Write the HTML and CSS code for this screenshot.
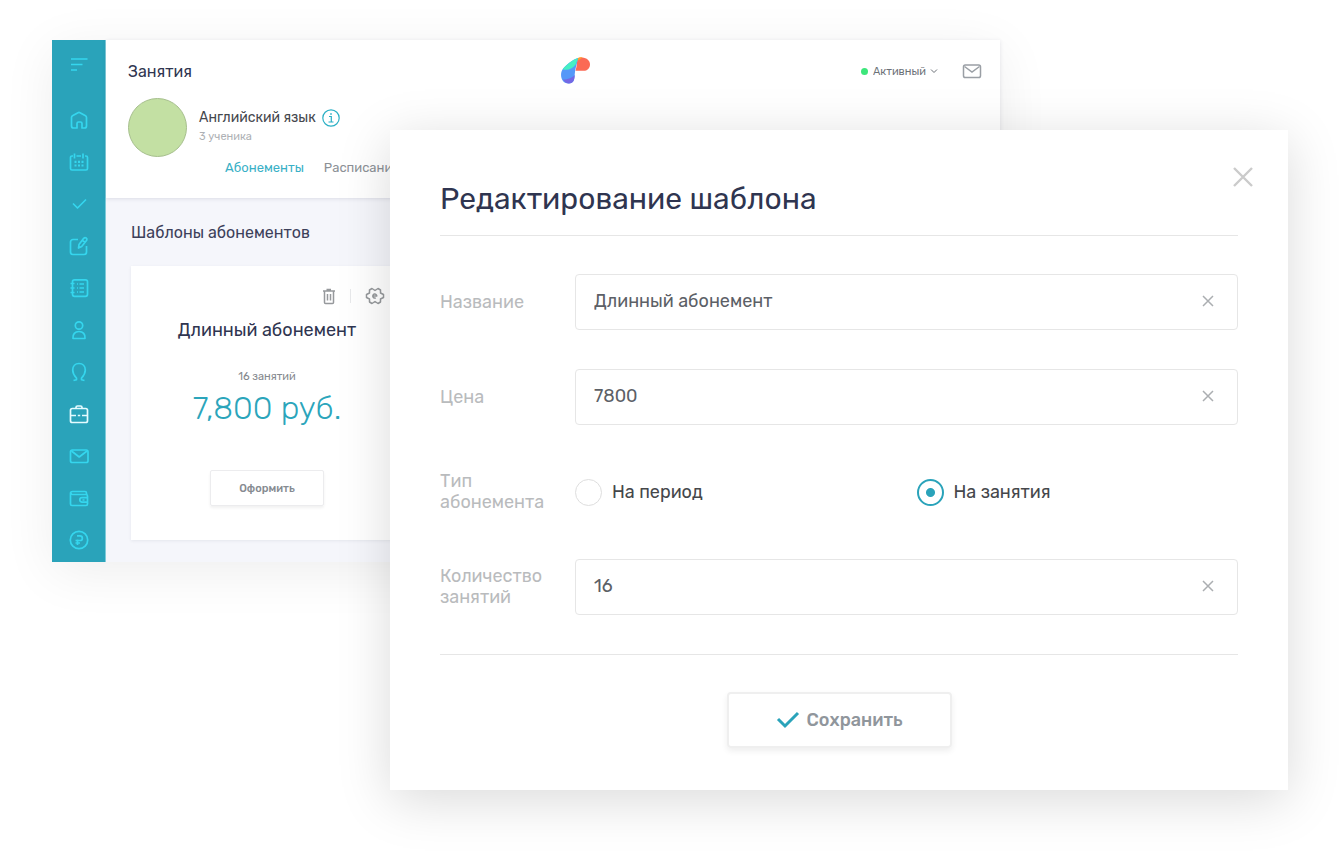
FILE: index.html
```html
<!DOCTYPE html>
<html lang="ru">
<head>
  <meta charset="utf-8">
  <meta name="viewport" content="width=device-width, initial-scale=1">
  <title>Занятия</title>
  <link rel="stylesheet" href="styles.css">
</head>
<body>
  <div class="scene">
    <div class="app">
      <nav class="sidebar">
        <a href="#" class="menu-toggle" aria-label="Меню">
          <svg width="20" height="20" viewBox="0 0 20 20"><path d="M2 4h16.500M2 9.500h11.500M2 15h6"/></svg>
        </a>
        <a href="#" class="nav-item" aria-label="Главная">
          <svg width="20" height="20" viewBox="0 0 20 20"><path d="M7 18H4.500a2 2 0 0 1-2-2V7.500a2 2 0 0 1 1-1.700L9 2.700a2 2 0 0 1 2 0l5.500 3.100a2 2 0 0 1 1 1.700V16a2 2 0 0 1-2 2H13v-4.500a1.500 1.500 0 0 0-1.500-1.500h-2A1.500 1.500 0 0 0 8 13.500V18z"/></svg>
        </a>
        <a href="#" class="nav-item" aria-label="Календарь">
          <svg width="20" height="20" viewBox="0 0 20 20"><path d="M4 4H3a1.500 1.500 0 0 0-1.500 1.500v11A1.500 1.500 0 0 0 3 18h14a1.500 1.500 0 0 0 1.500-1.500v-11A1.500 1.500 0 0 0 17 4h-1M5.500 1.500v5M14 1.500v5M7.500 4H12"/><path d="M5.500 9.800h2m1.500 0h2m1.500 0h2M5.500 13.500h2m1.500 0h2m1.500 0h2" stroke-width="2.200"/></svg>
        </a>
        <a href="#" class="nav-item" aria-label="Задачи">
          <svg width="20" height="20" viewBox="0 0 20 20"><path d="M4 9.500l4.500 4.500L17 5.500"/></svg>
        </a>
        <a href="#" class="nav-item" aria-label="Записи">
          <svg width="20" height="20" viewBox="0 0 20 20"><path d="M9 3.500H4A2.500 2.500 0 0 0 1.500 6v10A2.500 2.500 0 0 0 4 18.500h11a2.500 2.500 0 0 0 2.500-2.500v-6M9.500 12l.5-3.500 4.700-6.200c1.600-1.500 4 0 3 2L12.700 10.500zM13.500 4.500l2.500 1.800"/></svg>
        </a>
        <a href="#" class="nav-item" aria-label="Журнал">
          <svg width="20" height="20" viewBox="0 0 20 20"><rect x="3.500" y="1.800" width="15" height="16.500" rx="2"/><path d="M1.500 5.500h4M1.500 10h4M1.500 14.500h4M8 6h1m1.500 0H15M8 10h1m1.500 0H15M8 14h1m1.500 0H15"/></svg>
        </a>
        <a href="#" class="nav-item" aria-label="Ученики">
          <svg width="20" height="20" viewBox="0 0 20 20"><circle cx="10" cy="5.500" r="3.700"/><path d="M4 18.500c-.5-4.500 2-7 6-7s6.500 2.500 6 7z"/></svg>
        </a>
        <a href="#" class="nav-item" aria-label="Учителя">
          <svg width="20" height="20" viewBox="0 0 20 20"><path d="M4.500 18.500l3-.8V16C5 13.500 3.700 11 3.700 8c0-4 2.600-6.500 6.300-6.500S16.300 4 16.300 8c0 3-1.300 5.500-3.800 8v1.700l3 .8"/></svg>
        </a>
        <a href="#" class="nav-item active" aria-label="Занятия">
          <svg width="20" height="20" viewBox="0 0 20 20"><rect x="1.500" y="4.500" width="17" height="14" rx="1.800"/><path d="M7 4.500v-1A1.500 1.500 0 0 1 8.500 2h3A1.500 1.500 0 0 1 13 3.500v1M1.500 11.500H7m1.800 0h2.400m1.800 0h5.500"/></svg>
        </a>
        <a href="#" class="nav-item" aria-label="Почта">
          <svg width="20" height="20" viewBox="0 0 20 20"><rect x="1.500" y="4" width="17.500" height="12.500" rx="1.800"/><path d="M2.500 5l7.700 6L18 5"/></svg>
        </a>
        <a href="#" class="nav-item" aria-label="Кошелёк">
          <svg width="20" height="20" viewBox="0 0 20 20"><path d="M17.500 6.500V5A1.500 1.500 0 0 0 16 3.500H3.500a2 2 0 0 0-2 2V16a1.500 1.500 0 0 0 1.500 1.500h14A1.500 1.500 0 0 0 18.500 16V8A1.500 1.500 0 0 0 17 6.500H3.500a1.500 1.500 0 0 1-1.500-1.500M18.500 9.700H13a2.200 2.200 0 0 0 0 4.400h5.500M13.500 12h2"/></svg>
        </a>
        <a href="#" class="nav-item" aria-label="Оплата">
          <svg width="20" height="20" viewBox="0 0 20 20"><circle cx="10" cy="10" r="8.700"/><path d="M8.500 15V9.500M8 5.800h3a2.300 2.300 0 0 1 0 4.700H6.500M6.500 13H11"/></svg>
        </a>
      </nav>

      <div class="content">
        <header class="header">
          <div class="topbar">
            <h1 class="page-title">Занятия</h1>
            <svg class="logo" width="30" height="28" viewBox="0 0 30 28">
              <path d="M15.500 13.800C17 9 17 4 17.500 1.200 19 .5 20.500.4 22 .4c5 .2 8 3.500 8 6.800 0 4-2.500 6.600-6.500 6.600z" fill="#fb6a55"/>
              <path d="M17 1.800C18.500.5 20.500.2 22.500.4L17.500 4z" fill="#ff9f2e"/>
              <path d="M18 1C13 2.500 5 8.500 2.500 12.500-.5 17.500 1 26.500 8.500 26.500c5.500 0 6-4 6.200-9C15 11 17.500 6 18 1z" fill="#5598f8"/>
              <path d="M18 1C13 2.500 6 8 2.700 12.200 7 14 13 12 16 7z" fill="#45efc4"/>
              <path d="M3 22.500c2 3 4 4 6 4 4.500 0 5.500-4 5.700-8.500C12.500 20.500 8 22.500 3 22.500z" fill="#7468e4"/>
            </svg>
            <div class="account">
              <span class="dot"></span>
              <select class="status" aria-label="Статус">
                <option>Активный</option>
              </select>
              <svg class="chevron" width="8" height="8" viewBox="0 0 8 8"><path d="M1 2.500l3 3 3-3"/></svg>
              <a href="#" class="mail" aria-label="Сообщения">
                <svg width="20" height="16" viewBox="0 0 20 16"><rect x="1.500" y="2" width="17" height="12.500" rx="1.800"/><path d="M2.500 3.500L10 9l7.500-5.500"/></svg>
              </a>
            </div>
          </div>
          <div class="course">
            <div class="avatar"></div>
            <div class="course-info">
              <div class="course-name">
                Английский язык
                <svg width="18" height="18" viewBox="0 0 18 18"><circle cx="9" cy="9" r="8.200"/><path d="M7 7.500h2.300V13M6.500 13h5M9 4v2"/></svg>
              </div>
              <div class="course-count">3 ученика</div>
              <nav class="tabs">
                <a href="#" class="tab active">Абонементы</a>
                <a href="#" class="tab">Расписание</a>
              </nav>
            </div>
          </div>
        </header>

        <main class="main">
          <h2 class="section-title">Шаблоны абонементов</h2>
          <div class="card">
            <div class="card-tools">
              <button class="tool" aria-label="Удалить">
                <svg width="14" height="18" viewBox="0 0 14 18"><path d="M1 4h12M2.500 4v11.500a1 1 0 0 0 1 1h7a1 1 0 0 0 1-1V4M5.500 7v6.500M8.500 7v6.500M4.500 2.500H9"/></svg>
              </button>
              <span class="divider"></span>
              <button class="tool" aria-label="Настройки">
                <svg width="20" height="18" viewBox="0 0 20 18"><path d="M7 1.500l3 2 3-2 2.500 1.500v3l3 1.500v3l-3 1.500v3L13 16.500l-3-2-3 2L4.500 15v-3l-3-1.500v-3l3-1.500V3z"/><path d="M8.500 9h3.300a2 2 0 1 0-1 1.800"/></svg>
              </button>
            </div>
            <h3 class="card-title">Длинный абонемент</h3>
            <p class="card-count">16 занятий</p>
            <p class="card-price">7,800 руб.</p>
            <button class="card-button">Оформить</button>
          </div>
        </main>
      </div>
    </div>

    <div class="modal" role="dialog" aria-labelledby="modal-title">
      <button class="close" aria-label="Закрыть">
        <svg width="20" height="20" viewBox="0 0 20 20"><path d="M1 1l18 18M19 1L1 19"/></svg>
      </button>
      <h2 class="modal-title" id="modal-title">Редактирование шаблона</h2>
      <form class="form">
        <div class="row">
          <label class="label" for="name">Название</label>
          <div class="field">
            <input type="text" id="name" value="Длинный абонемент">
            <button type="button" class="clear" aria-label="Очистить">
              <svg width="12" height="12" viewBox="0 0 12 12"><path d="M1 1l10 10M11 1L1 11"/></svg>
            </button>
          </div>
        </div>
        <div class="row">
          <label class="label" for="price">Цена</label>
          <div class="field">
            <input type="text" id="price" value="7800">
            <button type="button" class="clear" aria-label="Очистить">
              <svg width="12" height="12" viewBox="0 0 12 12"><path d="M1 1l10 10M11 1L1 11"/></svg>
            </button>
          </div>
        </div>
        <div class="row" role="radiogroup" aria-labelledby="type-label">
          <span class="label" id="type-label">Тип абонемента</span>
          <div class="radios">
            <label class="radio"><input type="radio" name="type">На период</label>
            <label class="radio"><input type="radio" name="type" checked>На занятия</label>
          </div>
        </div>
        <div class="row">
          <label class="label" for="count">Количество занятий</label>
          <div class="field">
            <input type="text" id="count" value="16">
            <button type="button" class="clear" aria-label="Очистить">
              <svg width="12" height="12" viewBox="0 0 12 12"><path d="M1 1l10 10M11 1L1 11"/></svg>
            </button>
          </div>
        </div>
        <div class="form-footer">
          <button type="button" class="save">
            <svg width="24" height="18" viewBox="0 0 24 18"><path d="M2 8l7 7L22 2"/></svg>
            Сохранить
          </button>
        </div>
      </form>
    </div>
  </div>
</body>
</html>
```

FILE: styles.css
```css
* {
  margin: 0;
  padding: 0;
  box-sizing: border-box;
}

body {
  background: #fff;
  color: #2f3550;
  font-family: Rubik, Roboto, sans-serif;
}

a {
  text-decoration: none;
}

button, input, select {
  font-family: inherit;
  background: none;
  border: none;
  outline: none;
}

button {
  cursor: pointer;
}

svg {
  display: block;
  fill: none;
  stroke: currentColor;
  stroke-width: 1.5;
}

.scene {
  position: relative;
  min-height: 100vh;
  padding: 40px 52px 64px;
}

/* app window */
.app {
  display: flex;
  margin-right: 288px;
  background: #fff;
  box-shadow: 0 10px 50px rgba(0, 0, 0, 0.07);
}

.sidebar {
  display: flex;
  flex-direction: column;
  width: 54px;
  background: #2aa3ba;
  border-right: 1px solid #7fcbd9;
}

.sidebar svg {
  stroke-linejoin: round;
  stroke-width: 1.7;
}

.menu-toggle, .nav-item {
  display: flex;
  align-items: center;
  justify-content: center;
  height: 42px;
  color: #35d6ee;
}

.menu-toggle {
  height: 50px;
  margin-bottom: 9px;
}

.nav-item.active {
  color: #e4fbff;
}

.content {
  flex: 1;
  min-width: 0;
  background: #f5f6fb;
}

.header {
  position: relative;
  height: 158px;
  padding: 14px 18px 0 22px;
  background: #fff;
  box-shadow: 0 1px 4px rgba(40, 45, 80, 0.12);
}

.topbar {
  display: grid;
  grid-template-columns: 50% auto 1fr;
  align-items: center;
  height: 34px;
}

.page-title {
  font-size: 16px;
  font-weight: 400;
}

.logo {
  margin-left: 5px;
  stroke: none;
}

.account {
  display: flex;
  align-items: center;
  justify-content: flex-end;
  color: #6c7178;
}

.dot {
  width: 7px;
  height: 7px;
  margin-right: 5px;
  border-radius: 50%;
  background: #3de67b;
}

.status {
  appearance: none;
  color: inherit;
  font-size: 11px;
}

.chevron {
  margin-left: 4px;
  stroke-width: 1;
}

.mail {
  margin-left: 24px;
  color: #9a9fa5;
}

.course {
  display: flex;
  gap: 12px;
  margin-top: 10px;
}

.avatar {
  flex: none;
  width: 59px;
  height: 59px;
  border: 1px solid #a6bf8d;
  border-radius: 50%;
  background: #c3e0a3;
}

.course-name {
  display: flex;
  align-items: center;
  gap: 6px;
  padding-top: 10px;
  color: #45484e;
  font-size: 14px;
  line-height: 20px;
}

.course-name svg {
  color: #2bb0c5;
  stroke-width: 1.2;
}

.course-count {
  color: #aeb1b5;
  font-size: 11px;
  line-height: 18px;
}

.tabs {
  display: flex;
  gap: 20px;
  margin: 12px 0 0 26px;
}

.tab {
  color: #8c9196;
  font-size: 13px;
  line-height: 20px;
}

.tab.active {
  color: #39b0c6;
}

.main {
  padding: 24px 25px 22px;
}

.section-title {
  color: #3c405a;
  font-size: 16px;
  font-weight: 400;
  line-height: 22px;
}

.card {
  width: 272px;
  margin-top: 22px;
  padding: 20px 18px 34px;
  background: #fff;
  box-shadow: 0 1px 3px rgba(40, 45, 80, 0.08);
  text-align: center;
}

.card-tools {
  display: flex;
  align-items: center;
  justify-content: flex-end;
  gap: 14px;
  height: 20px;
}

.tool {
  color: #96999c;
}

.tool svg {
  stroke-linejoin: round;
}

.divider {
  width: 1px;
  height: 14px;
  background: #e8e9eb;
}

.card-title {
  margin-top: 12px;
  font-size: 18px;
  font-weight: 400;
  line-height: 24px;
}

.card-count {
  margin-top: 26px;
  color: #85898e;
  font-size: 11px;
  line-height: 18px;
}

.card-price {
  margin-top: 2px;
  color: #2ba5bb;
  font-size: 32px;
  font-weight: 300;
  line-height: 40px;
}

.card-button {
  width: 114px;
  height: 36px;
  margin-top: 42px;
  border: 1px solid #ececee;
  border-radius: 2px;
  box-shadow: 0 2px 3px rgba(0, 0, 0, 0.06);
  color: #868b91;
  font-size: 11px;
  font-weight: 500;
}

/* edit template dialog */
.modal {
  position: absolute;
  top: 130px;
  left: 390px;
  right: 52px;
  padding: 46px 50px 42px;
  background: #fff;
  box-shadow: 0 10px 50px rgba(0, 0, 0, 0.15);
}

.close {
  position: absolute;
  top: 37px;
  right: 35px;
  color: #cbcbcb;
}

.close svg {
  stroke-width: 2.4;
}

.modal-title {
  padding-bottom: 13px;
  border-bottom: 1px solid #e6e6e6;
  font-size: 30px;
  font-weight: 400;
  line-height: 46px;
}

.form {
  display: flex;
  flex-direction: column;
  gap: 39px;
  padding-top: 38px;
}

.row {
  display: flex;
  align-items: center;
  min-height: 56px;
}

.label {
  flex: none;
  width: 135px;
  padding-right: 20px;
  color: #b9bbbd;
  font-size: 18px;
  line-height: 21px;
}

.field {
  display: flex;
  align-items: center;
  flex: 1;
  height: 56px;
  padding: 0 23px 2px 18px;
  border: 1px solid #e6e6e6;
  border-radius: 4px;
}

.field input {
  flex: 1;
  min-width: 0;
  color: #5c6066;
  font-size: 18px;
}

.clear {
  color: #abaeb1;
}

.radios {
  display: grid;
  grid-template-columns: 1fr 1fr;
  gap: 20px;
  flex: 1;
}

.radio {
  display: flex;
  align-items: center;
  gap: 10px;
  color: #45474b;
  font-size: 18px;
}

.radio input {
  appearance: none;
  width: 27px;
  height: 27px;
  border: 1px solid #dedede;
  border-radius: 50%;
}

.radio input:checked {
  border: 2px solid #2aa3ba;
  background: radial-gradient(circle, #2aa3ba 4px, transparent 5px);
}

.form-footer {
  display: flex;
  justify-content: center;
  padding-top: 37px;
  border-top: 1px solid #e6e6e6;
}

.save {
  display: flex;
  align-items: center;
  justify-content: center;
  gap: 7px;
  width: 225px;
  height: 56px;
  border: 2px solid #efefef;
  border-radius: 4px;
  box-shadow: 0 3px 6px rgba(0, 0, 0, 0.07);
  color: #90969c;
  font-size: 18px;
  font-weight: 500;
}

.save svg {
  color: #2aa3ba;
  stroke-width: 3;
}
```
